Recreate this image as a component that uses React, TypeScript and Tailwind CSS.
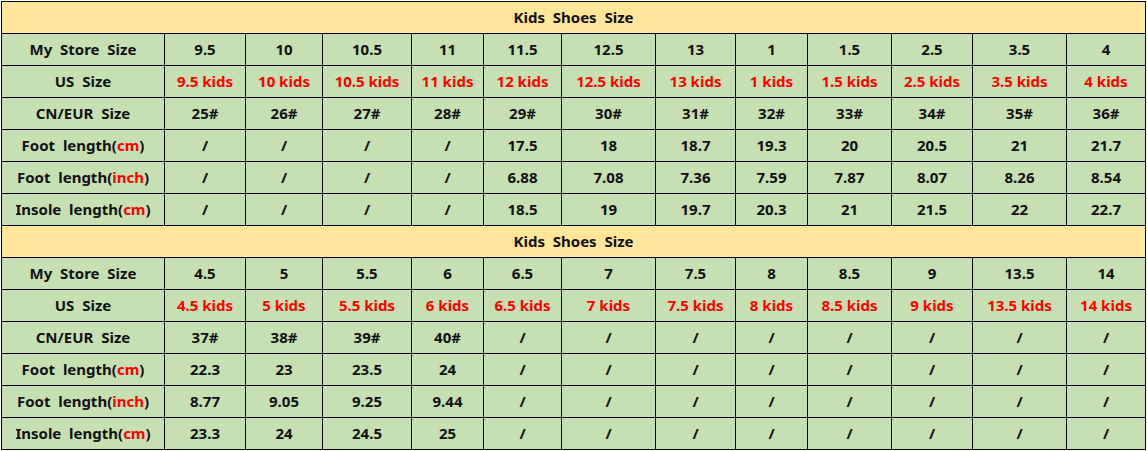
const cols = ['163px', '81px', '77px', '89px', '72px', '78px', '94px', '80px', '72px', '84px', '81px', '94px', '79px']

type Row = { label: React.ReactNode; values: string[]; red?: boolean }

const unit = (name: string, u: string) => (
  <>
    {name}(<span className="text-[#ff0000]">{u}</span>)
  </>
)

const first: Row[] = [
  { label: 'My  Store  Size', values: ['9.5', '10', '10.5', '11', '11.5', '12.5', '13', '1', '1.5', '2.5', '3.5', '4'] },
  { label: 'US  Size', red: true, values: ['9.5 kids', '10 kids', '10.5 kids', '11 kids', '12 kids', '12.5 kids', '13 kids', '1 kids', '1.5 kids', '2.5 kids', '3.5 kids', '4 kids'] },
  { label: 'CN/EUR  Size', values: ['25#', '26#', '27#', '28#', '29#', '30#', '31#', '32#', '33#', '34#', '35#', '36#'] },
  { label: unit('Foot  length', 'cm'), values: ['/', '/', '/', '/', '17.5', '18', '18.7', '19.3', '20', '20.5', '21', '21.7'] },
  { label: unit('Foot  length', 'inch'), values: ['/', '/', '/', '/', '6.88', '7.08', '7.36', '7.59', '7.87', '8.07', '8.26', '8.54'] },
  { label: unit('Insole  length', 'cm'), values: ['/', '/', '/', '/', '18.5', '19', '19.7', '20.3', '21', '21.5', '22', '22.7'] },
]

const second: Row[] = [
  { label: 'My  Store  Size', values: ['4.5', '5', '5.5', '6', '6.5', '7', '7.5', '8', '8.5', '9', '13.5', '14'] },
  { label: 'US  Size', red: true, values: ['4.5 kids', '5 kids', '5.5 kids', '6 kids', '6.5 kids', '7 kids', '7.5 kids', '8 kids', '8.5 kids', '9 kids', '13.5 kids', '14 kids'] },
  { label: 'CN/EUR  Size', values: ['37#', '38#', '39#', '40#', '/', '/', '/', '/', '/', '/', '/', '/'] },
  { label: unit('Foot  length', 'cm'), values: ['22.3', '23', '23.5', '24', '/', '/', '/', '/', '/', '/', '/', '/'] },
  { label: unit('Foot  length', 'inch'), values: ['8.77', '9.05', '9.25', '9.44', '/', '/', '/', '/', '/', '/', '/', '/'] },
  { label: unit('Insole  length', 'cm'), values: ['23.3', '24', '24.5', '25', '/', '/', '/', '/', '/', '/', '/', '/'] },
]

function Section({ rows }: { rows: Row[] }) {
  return (
    <>
      <div className="col-span-13 flex items-center justify-center bg-[#ffe699] whitespace-pre">Kids  Shoes  Size</div>
      {rows.map((row, i) => (
        <div key={i} className="contents">
          <div className="flex items-center justify-center bg-[#c6e0b4] whitespace-pre">{row.label}</div>
          {row.values.map((v, j) => (
            <div
              key={j}
              className={`flex items-center justify-center bg-[#c6e0b4] whitespace-pre ${row.red ? 'text-[#ff0000]' : ''}`}
            >
              {v}
            </div>
          ))}
        </div>
      ))}
    </>
  )
}

export default function App() {
  return (
    <div className="h-[451px] w-[1147px] bg-white pt-px pl-px">
      <div
        className="grid w-[1145px] grid-rows-[repeat(14,31px)] gap-px bg-black p-px text-[15px] leading-none font-bold text-[#111] font-['Noto_Sans',sans-serif]"
        style={{ gridTemplateColumns: cols.map((c) => `${parseInt(c) - 1}px`).join(' ') }}
      >
        <Section rows={first} />
        <Section rows={second} />
      </div>
    </div>
  )
}
